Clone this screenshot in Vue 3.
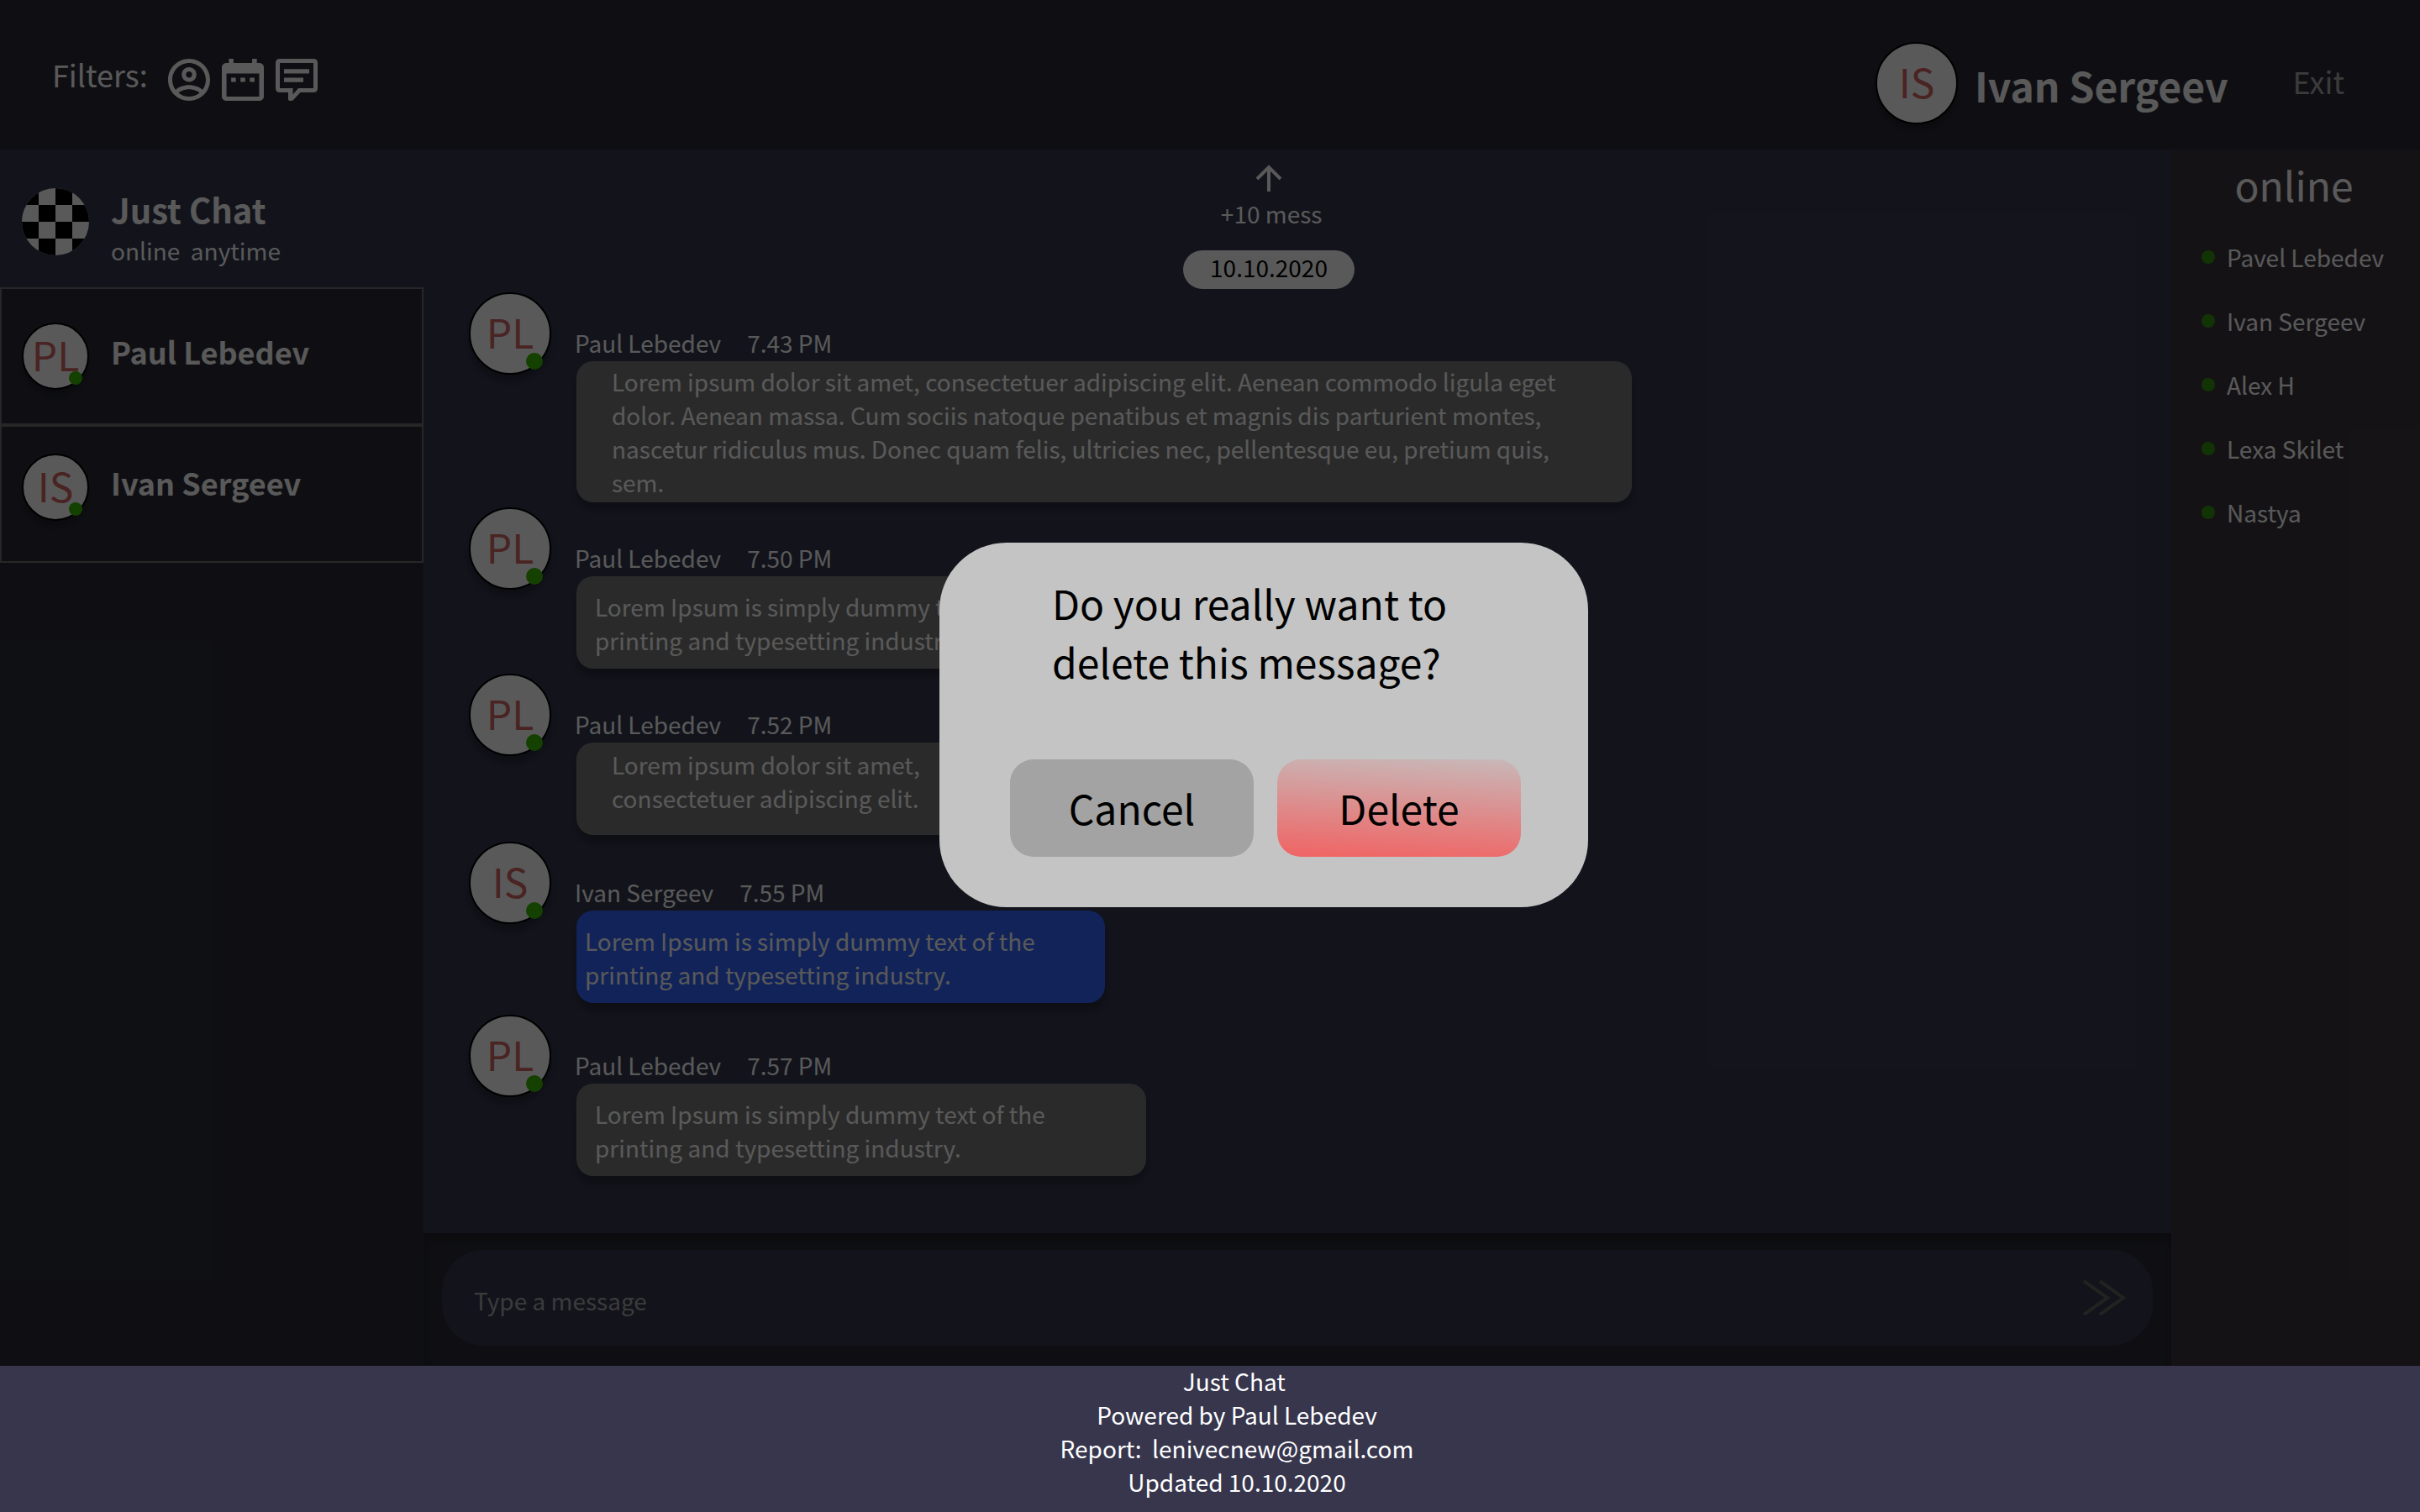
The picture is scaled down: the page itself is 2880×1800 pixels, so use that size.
<script setup>
import { ref } from 'vue'

const draft = ref('')

const chats = [
  { name: 'Paul Lebedev', initials: 'PL' },
  { name: 'Ivan Sergeev', initials: 'IS' },
]

const lorem = 'Lorem Ipsum is simply dummy text of the printing and typesetting industry.'

const messages = [
  {
    author: 'Paul Lebedev',
    initials: 'PL',
    time: '7.43 PM',
    kind: 'wide',
    text: 'Lorem ipsum dolor sit amet, consectetuer adipiscing elit. Aenean commodo ligula eget dolor. Aenean massa. Cum sociis natoque penatibus et magnis dis parturient montes, nascetur ridiculus mus. Donec quam felis, ultricies nec, pellentesque eu, pretium quis, sem.',
  },
  { author: 'Paul Lebedev', initials: 'PL', time: '7.50 PM', kind: 'regular', text: lorem },
  {
    author: 'Paul Lebedev',
    initials: 'PL',
    time: '7.52 PM',
    kind: 'narrow',
    text: 'Lorem ipsum dolor sit amet, consectetuer adipiscing elit.',
  },
  { author: 'Ivan Sergeev', initials: 'IS', time: '7.55 PM', kind: 'own', text: lorem },
  { author: 'Paul Lebedev', initials: 'PL', time: '7.57 PM', kind: 'regular', text: lorem },
]

const online = ['Pavel Lebedev', 'Ivan Sergeev', 'Alex H', 'Lexa Skilet', 'Nastya']
</script>

<template>
  <div class="app">
    <div class="stage">
      <header class="topbar">
        <div class="filters">
          <span class="filters-label">Filters:</span>
          <div class="filter-buttons">
            <button type="button" aria-label="Filter by author">
              <svg viewBox="2 2 20 20">
                <path d="M12 2C6.48 2 2 6.48 2 12s4.48 10 10 10 10-4.48 10-10S17.52 2 12 2zM7.07 18.28c.43-.9 3.05-1.78 4.93-1.78s4.51.88 4.93 1.78C15.57 19.36 13.86 20 12 20s-3.57-.64-4.93-1.72zm11.29-1.45c-1.43-1.74-4.9-2.33-6.36-2.33s-4.93.59-6.36 2.33C4.62 15.49 4 13.82 4 12c0-4.41 3.59-8 8-8s8 3.59 8 8c0 1.82-.62 3.49-1.64 4.83zM12 6c-1.94 0-3.5 1.56-3.5 3.5S10.06 13 12 13s3.5-1.56 3.5-3.5S13.94 6 12 6zm0 5c-.83 0-1.5-.67-1.5-1.5S11.17 8 12 8s1.5.67 1.5 1.5S12.83 11 12 11z" />
              </svg>
            </button>
            <button type="button" aria-label="Filter by date">
              <svg viewBox="3 2 18 20" preserveAspectRatio="none">
                <path d="M9 11H7v2h2v-2zm4 0h-2v2h2v-2zm4 0h-2v2h2v-2zm2-7h-1V2h-2v2H8V2H6v2H5c-1.11 0-1.99.9-1.99 2L3 20c0 1.1.89 2 2 2h14c1.1 0 2-.9 2-2V6c0-1.1-.9-2-2-2zm0 16H5V9h14v11z" />
              </svg>
            </button>
            <button type="button" aria-label="Filter by message">
              <svg viewBox="0 0 50 50">
                <path fill-rule="evenodd" d="M5 0H45Q50 0 50 5V35Q50 40 45 40H29.500L21 49Q20 50 19 50H17Q15 50 15 48V40H5Q0 40 0 35V5Q0 0 5 0ZM5 5V35H20.500V42.500L27 35H45V5Z" />
                <path d="M10 12.200H40V17.600H10ZM10 22.400H33V27.700H10Z" />
              </svg>
            </button>
          </div>
        </div>
        <div class="account">
          <span class="avatar">IS</span>
          <strong class="account-name">Ivan Sergeev</strong>
          <button type="button" class="exit">Exit</button>
        </div>
      </header>

      <div class="columns">
        <nav class="chats" aria-label="Chats">
          <button type="button" class="chat common">
            <svg class="board" viewBox="0 0 80 80">
              <clipPath id="board-round"><circle cx="40" cy="40" r="40" /></clipPath>
              <g clip-path="url(#board-round)">
                <rect width="80" height="80" fill="#fff" />
                <path d="M0 0h20v20H0zM40 0h20v20H40zM20 20h20v20H20zM60 20h20v20H60zM0 40h20v20H0zM40 40h20v20H40zM20 60h20v20H20zM60 60h20v20H60z" />
              </g>
            </svg>
            <span class="chat-title">
              <strong>Just Chat</strong>
              <span>online&nbsp; anytime</span>
            </span>
          </button>
          <button v-for="chat in chats" :key="chat.name" type="button" class="chat person">
            <span class="avatar small">{{ chat.initials }}<i class="dot"></i></span>
            <strong class="chat-name">{{ chat.name }}</strong>
          </button>
        </nav>

        <main class="conversation">
          <div class="history">
            <button type="button" class="load-more">
              <svg viewBox="0 0 32 32">
                <path d="M16 32V3M2 17L16 3L30 17" fill="none" stroke="#fff" stroke-width="4" />
              </svg>
              <span>&nbsp;+10 mess</span>
            </button>
            <time class="day" datetime="2020-10-10">10.10.2020</time>
            <article
              v-for="message in messages"
              :key="message.time"
              class="message"
              :class="message.kind"
            >
              <span class="avatar">{{ message.initials }}<i class="dot"></i></span>
              <div class="message-body">
                <div class="meta">
                  <span>{{ message.author }}</span>
                  <time>{{ message.time }}</time>
                </div>
                <p class="bubble">{{ message.text }}</p>
              </div>
            </article>
          </div>
          <form class="composer" @submit.prevent>
            <div class="field">
              <input v-model="draft" type="text" placeholder="Type a message" aria-label="Type a message" />
              <button type="submit" aria-label="Send">
                <svg viewBox="0 0 52 44">
                  <path d="M2 2L30 22L2 42M21 2L49 22L21 42" fill="none" stroke="#62625c" stroke-width="4" />
                </svg>
              </button>
            </div>
          </form>
        </main>

        <aside class="people">
          <h2>online</h2>
          <ul>
            <li v-for="person in online" :key="person"><i class="mark"></i>{{ person }}</li>
          </ul>
        </aside>
      </div>

      <div class="overlay">
        <section class="dialog" role="dialog" aria-modal="true" aria-labelledby="dialog-question">
          <p id="dialog-question">Do you really want to delete this message?</p>
          <div class="actions">
            <button type="button" class="cancel">Cancel</button>
            <button type="button" class="delete">Delete</button>
          </div>
        </section>
      </div>
    </div>

    <footer class="footer">
      <span>Just Chat&nbsp;</span>
      <span>Powered by Paul Lebedev</span>
      <span>Report:&nbsp; lenivecnew@gmail.com</span>
      <span>Updated 10.10.2020</span>
    </footer>
  </div>
</template>

<style>
body {
  margin: 0;
  background: #37364d;
}
</style>

<style scoped>
.app {
  display: flex;
  flex-direction: column;
  min-height: 100vh;
  color: #fff;
  font-family: "Noto Sans CJK SC", "Noto Sans", sans-serif;
  font-size: 28px;
  line-height: 40px;
}

.app *,
.app {
  box-sizing: border-box;
}

button,
input {
  margin: 0;
  padding: 0;
  border: 0;
  background: none;
  color: inherit;
  font: inherit;
}

svg {
  display: block;
}

.stage {
  position: relative;
  display: flex;
  flex: 1;
  flex-direction: column;
  background: #36384f;
}

/* Top bar */
.topbar {
  display: flex;
  align-items: flex-start;
  justify-content: space-between;
  min-height: 178px;
  padding: 50px 90px 0 62px;
  background: #2c2d38;
}

.filters {
  display: flex;
  align-items: flex-start;
  gap: 24px;
  padding-top: 12px;
}

.filters-label,
.exit {
  font-size: 36px;
  line-height: 52px;
}

.filter-buttons {
  display: flex;
  gap: 14px;
  padding-top: 8px;
}

.filter-buttons svg {
  width: 50px;
  height: 50px;
  fill: #fff;
}

.account {
  display: flex;
  align-items: flex-start;
}

.account-name {
  margin: 16px 77px 0 20px;
  font-size: 48px;
  line-height: 70px;
}

.exit {
  margin-top: 20px;
  color: #a9a9a9;
}

.avatar {
  position: relative;
  display: flex;
  flex: none;
  align-items: center;
  justify-content: center;
  width: 98px;
  height: 98px;
  border: 2px solid #000;
  border-radius: 50%;
  background: #fff;
  box-shadow: 0 8px 8px rgba(0, 0, 0, 0.25);
  color: #d46464;
  font-size: 48px;
  line-height: 70px;
  padding-bottom: 6px;
}

.avatar.small {
  width: 80px;
  height: 80px;
}

.dot {
  position: absolute;
  right: 8px;
  bottom: 4px;
  width: 20px;
  height: 20px;
  border-radius: 50%;
  background: #39b700;
}

.small .dot {
  right: 6px;
  width: 16px;
  height: 16px;
}

/* Columns */
.columns {
  display: grid;
  flex: 1;
  grid-template-columns: 504px 1fr 296px;
}

.chats {
  background: #2c2d38;
}

.chat {
  display: flex;
  align-items: flex-start;
  gap: 26px;
  width: 100%;
  height: 164px;
  text-align: left;
}

.common {
  padding: 42px 26px 0;
  background: #36384f;
}

.board {
  width: 80px;
  height: 80px;
  margin-top: 4px;
}

.chat-title {
  display: flex;
  flex-direction: column;
}

.chat-title strong {
  font-size: 40px;
  line-height: 58px;
}

.person {
  padding: 40px 24px 0;
  border: 2px solid #6f6f6f;
}

.person:last-child {
  padding-top: 32px;
}

.chat-name {
  padding-top: 8px;
  font-size: 36px;
  line-height: 52px;
}

/* Conversation */
.conversation {
  display: flex;
  flex-direction: column;
}

.history {
  display: flex;
  flex: 1;
  flex-direction: column;
  align-items: center;
  padding: 18px 122px 0 54px;
}

.load-more {
  display: flex;
  flex-direction: column;
  align-items: center;
  gap: 6px;
}

.load-more svg {
  width: 32px;
  height: 32px;
}

.day {
  margin: 24px 0 4px;
  padding: 0 32px 6px;
  border-radius: 23px;
  background: #fff;
  color: #000;
}

.message {
  display: flex;
  align-self: stretch;
  gap: 28px;
}

.message + .message {
  margin-top: 6px;
}

.message + .own {
  margin-top: 8px;
}

.own + .message {
  margin-top: 14px;
}

.message-body {
  padding-top: 40px;
}

.meta {
  display: flex;
  gap: 31px;
}

.bubble {
  min-height: 110px;
  margin: 2px 0 0 2px;
  border-radius: 20px;
  background: #7a7a7a;
  box-shadow: 0 8px 8px rgba(0, 0, 0, 0.25);
}

.wide .bubble {
  max-width: 1256px;
  padding: 4px 86px 4px 42px;
}

.regular .bubble {
  max-width: 678px;
  padding: 16px 90px 14px 22px;
}

.narrow .bubble {
  max-width: 480px;
  padding: 6px 42px 24px;
}

.own .bubble {
  max-width: 629px;
  padding: 16px 70px 14px 10px;
  background: #3366ff;
}

.composer {
  padding: 20px 22px 24px;
  background: #2c2d38;
  box-shadow: inset 0 8px 16px rgba(0, 0, 0, 0.25);
}

.field {
  display: flex;
  align-items: center;
  height: 114px;
  padding: 0 32px 0 38px;
  border-radius: 50px;
  background: #36384f;
}

.field input {
  flex: 1;
  height: 46px;
  padding-top: 6px;
  outline: none;
}

.field input::placeholder {
  color: #a9a9a9;
  opacity: 1;
}

.field svg {
  width: 52px;
  height: 44px;
}

/* People online */
.people {
  padding-top: 6px;
  background: #3b363e;
}

.people h2 {
  margin: 0;
  padding-right: 4px;
  font-size: 48px;
  font-weight: 400;
  line-height: 70px;
  text-align: center;
}

.people ul {
  display: flex;
  flex-direction: column;
  gap: 36px;
  margin: 32px 0 0;
  padding: 0 0 0 36px;
  list-style: none;
}

.people li {
  display: flex;
  align-items: center;
  gap: 14px;
}

.mark {
  width: 16px;
  height: 16px;
  border-radius: 50%;
  background: #359410;
}

/* Confirmation dialog */
.overlay {
  position: absolute;
  inset: 0;
  display: flex;
  align-items: center;
  justify-content: center;
  padding: 100px 0 0 128px;
  background: rgba(0, 0, 0, 0.65);
}

.dialog {
  width: 772px;
  padding: 36px 80px 60px 84px;
  border-radius: 80px;
  background: #c4c4c4;
  color: #000;
  font-size: 48px;
  line-height: 70px;
}

.dialog p {
  margin: 0 50px 82px;
}

.actions {
  display: flex;
  gap: 28px;
}

.actions button {
  flex: 1;
  height: 116px;
  padding-bottom: 2px;
  border-radius: 28px;
}

.cancel {
  background: #a3a3a3;
}

.delete {
  background: linear-gradient(183deg, #c8b8b8, #f16363);
}

/* Footer */
.footer {
  position: relative;
  display: grid;
  align-content: end;
  justify-items: center;
  height: 174px;
  padding: 0 0 16px 64px;
  background: #37364d;
}
</style>
